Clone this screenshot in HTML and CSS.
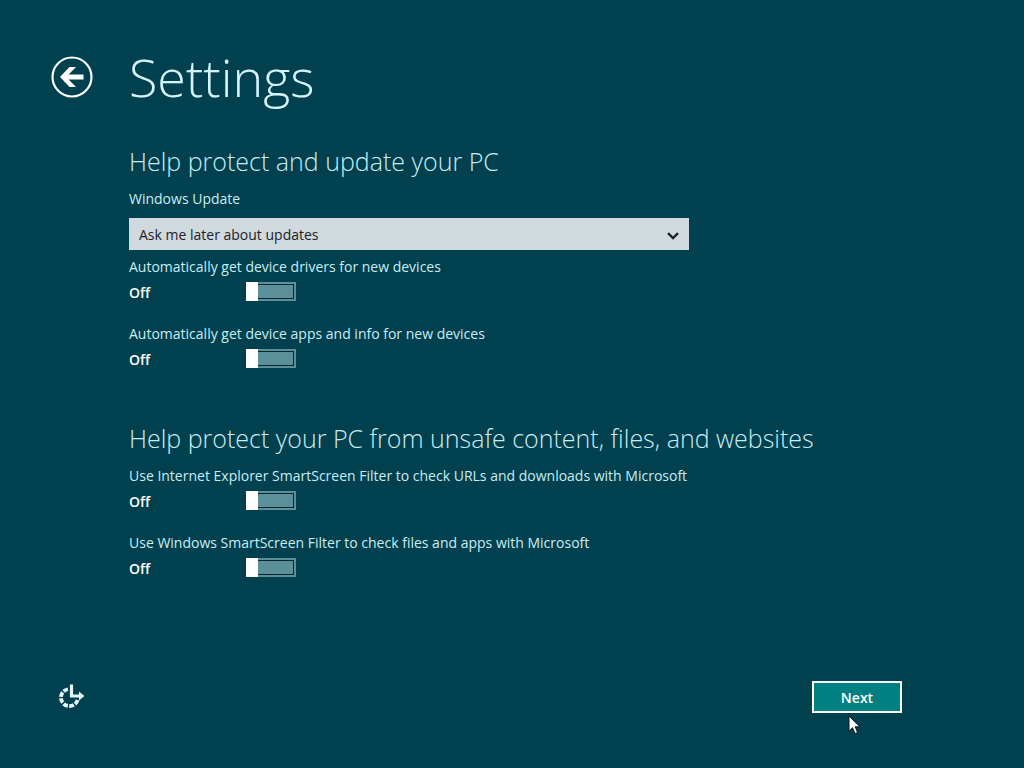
FILE: index.html
```html
<!DOCTYPE html>
<html lang="en">
<head>
<meta charset="UTF-8">
<meta name="viewport" content="width=device-width, initial-scale=1.0">
<title>Settings</title>
<link rel="stylesheet" href="styles.css">
</head>
<body>
<header class="header">
<button class="back-btn" type="button" aria-label="Back">
<svg viewBox="0 0 42 42" width="42" height="42">
<circle cx="21" cy="21" r="19.5" fill="none" stroke="#fff" stroke-width="2.2"/>
<path d="M9 21 L18.5 11 H25 L17.6 18.6 H32.5 V23.4 H17.6 L25 31 H18.5 Z" fill="#fff"/>
</svg>
</button>
<h1>Settings</h1>
</header>
<main class="content">
<section class="group">
<h2>Help protect and update your PC</h2>
<label class="label" for="update">Windows Update</label>
<div class="select-box">
<select id="update">
<option>Ask me later about updates</option>
</select>
<svg class="chevron" viewBox="0 0 12 8" width="12" height="8"><path d="M1 1.2 L6 6 L11 1.2" fill="none" stroke="#1c2226" stroke-width="2.4"/></svg>
</div>
<div class="setting">
<label class="label" for="drivers">Automatically get device drivers for new devices</label>
<div class="row"><span class="state">Off</span><input class="toggle" type="checkbox" id="drivers"></div>
</div>
<div class="setting">
<label class="label" for="apps">Automatically get device apps and info for new devices</label>
<div class="row"><span class="state">Off</span><input class="toggle" type="checkbox" id="apps"></div>
</div>
</section>
<section class="group">
<h2>Help protect your PC from unsafe content, files, and websites</h2>
<div class="setting">
<label class="label" for="ie">Use Internet Explorer SmartScreen Filter to check URLs and downloads with Microsoft</label>
<div class="row"><span class="state">Off</span><input class="toggle" type="checkbox" id="ie"></div>
</div>
<div class="setting">
<label class="label" for="win">Use Windows SmartScreen Filter to check files and apps with Microsoft</label>
<div class="row"><span class="state">Off</span><input class="toggle" type="checkbox" id="win"></div>
</div>
</section>
</main>
<footer class="footer">
<button class="ease-btn" type="button" aria-label="Ease of access">
<svg viewBox="0 0 26 26" width="26" height="26" fill="none" stroke="#e6f6fa">
<path d="M18.6 16 A8.5 8.5 0 1 1 9.2 5.2" stroke-width="3.8" stroke-dasharray="4.8 1.4"/>
<path d="M12.5 0.5 V12 H21" stroke-width="3.2"/>
<path d="M20 7.5 L25.5 12 L20 16.5 Z" fill="#e6f6fa" stroke="none"/>
</svg>
</button>
<div class="next-box">
<button class="next-btn" type="button">Next</button>
<svg class="cursor" viewBox="0 0 13 20" width="13" height="20"><path d="M1 1 V16 L4.5 12.8 L7 18.6 L9.6 17.5 L7.2 11.8 H12 Z" fill="#fff" stroke="#0b1a20" stroke-width="1"/></svg>
</div>
</footer>
</body>
</html>
```
FILE: styles.css
```css
* { box-sizing: border-box; }
body { margin: 0; min-height: 100vh; display: flex; flex-direction: column; background: #00404f; color: #c9edf3; font-family: "Open Sans", "Noto Sans", sans-serif; font-size: 14px; line-height: 20px; }
button { padding: 0; border: none; background: none; cursor: pointer; font: inherit; }
svg { display: block; }
h1, h2 { margin: 0; font-weight: 300; }
h1 { font-size: 52px; line-height: 72px; color: #d5f3f8; }
h2 { font-size: 25px; line-height: 36px; margin-bottom: 10px; }
.header { display: flex; align-items: center; gap: 36px; padding: 41px 51px 0; }
.content { flex: 1; padding: 30px 51px 0 129px; }
.group { margin-bottom: 51px; }
.group:last-child { margin-bottom: 0; }
.label { display: block; }
.select-box { position: relative; max-width: 560px; margin: 9px 0 7px; }
.select-box select { display: block; width: 100%; height: 32px; padding: 1px 10px 0; border: none; border-radius: 0; appearance: none; background: #d0d9de; color: #1c2226; font: inherit; }
.chevron { position: absolute; right: 10px; top: 14px; pointer-events: none; }
.setting { margin-bottom: 22px; }
.row { display: flex; align-items: flex-start; height: 20px; margin-top: 5px; }
.state { width: 117px; line-height: 22px; font-weight: 600; color: #fff; }
.toggle { position: relative; width: 50px; height: 19px; margin: 0; appearance: none; border: 2px solid #5b8f9a; background: #5b8f9a; outline: 1px solid #06262f; outline-offset: -3px; cursor: pointer; }
.toggle::before { content: ""; position: absolute; left: -2px; top: -2px; width: 12px; height: 19px; background: #fff; }
.toggle:checked { background: #008080; }
.toggle:checked::before { left: auto; right: -2px; }
.footer { display: flex; align-items: center; justify-content: space-between; padding: 0 122px 55px 59px; }
.next-box { position: relative; }
.next-btn { display: block; width: 90px; height: 32px; padding-top: 1px; border: 2px solid #fff; background: #008080; color: #fff; font-weight: 600; }
.cursor { position: absolute; left: 36px; top: 34px; }
```
